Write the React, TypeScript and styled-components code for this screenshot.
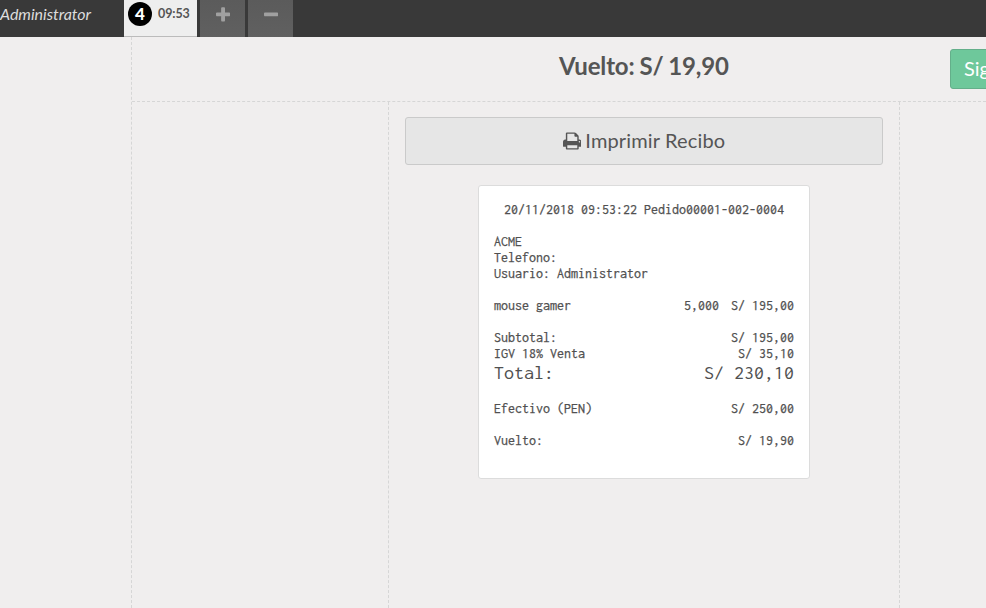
import React from "react";
import styled, { createGlobalStyle } from "styled-components";

const Global = createGlobalStyle`
  * { box-sizing: border-box; }
  html, body { margin: 0; padding: 0; overflow: hidden; background: #f0eeee; }
  body { font-family: Lato, "Open Sans", sans-serif; color: #555; }
`;

const Screen = styled.div`
  display: flex;
  flex-direction: column;
  width: 986px;
  height: 608px;
  overflow: hidden;
  background: #f0eeee;
`;

const TopBar = styled.header`
  display: flex;
  flex: none;
  height: 37px;
  background: #393939;
`;

const UserName = styled.span`
  width: 124px;
  color: #ddd;
  font-size: 16px;
  font-style: italic;
  line-height: 28px;
  letter-spacing: -0.03px;
  white-space: nowrap;
`;

const OrderTab = styled.div`
  display: flex;
  align-items: flex-start;
  width: 73px;
  padding: 2px 0 0 4px;
  margin-right: 3px;
  background: #eee;
  border-bottom: 1px solid #bbb;
`;

const OrderNumber = styled.span`
  width: 24px;
  height: 24px;
  border-radius: 50%;
  background: #000;
  color: #fff;
  font-size: 17px;
  font-weight: 900;
  line-height: 24px;
  text-align: center;
`;

const OrderTime = styled.span`
  margin-left: 6px;
  font-size: 12.5px;
  font-weight: 700;
  line-height: 23px;
  letter-spacing: -0.1px;
`;

const TabButton = styled.button`
  display: flex;
  justify-content: center;
  width: 45px;
  height: 37px;
  margin: 0 3px 0 0;
  padding: 6px 0 0 1px;
  border: 0;
  background: linear-gradient(#5b5b5b, #606060);
  color: #a0a0a0;
`;

const Icon = styled.svg<{ $size: number }>`
  display: block;
  height: ${(p) => p.$size}px;
  fill: currentColor;
`;

const Payment = styled.main`
  display: flex;
  flex: 1;
  flex-direction: column;
  margin-left: 131px;
  border-left: 1px dashed #d6d6d6;
`;

const Heading = styled.div`
  display: flex;
  flex: none;
  height: 65px;
  border-bottom: 1px dashed #d6d6d6;
`;

const Change = styled.h1`
  flex: none;
  width: 818px;
  margin: 0;
  padding-left: 427px;
  font-size: 24px;
  font-weight: 700;
  line-height: 58px;
  letter-spacing: -0.15px;
  word-spacing: -0.8px;
  white-space: nowrap;
`;

const NextButton = styled.button`
  flex: none;
  width: 120px;
  height: 40px;
  margin-top: 12px;
  padding: 0 0 2px 13px;
  border: 1px solid #64af8a;
  border-radius: 3px;
  background: #6ec89b;
  color: #fff;
  font: 20px/36px Lato, sans-serif;
  text-align: left;
`;

const ReceiptArea = styled.section`
  display: flex;
  flex: 1;
  flex-direction: column;
  align-items: center;
  width: 512px;
  margin-left: 256px;
  padding-top: 15px;
  border: 1px dashed #d6d6d6;
  border-width: 0 1px;
`;

const PrintButton = styled.button`
  display: flex;
  flex: none;
  align-items: center;
  justify-content: center;
  gap: 4px;
  width: 478px;
  height: 48px;
  padding: 0;
  border: 1px solid #cacaca;
  border-radius: 3px;
  background: #e6e6e6;
  color: #555;
  font: 20px/44px Lato, sans-serif;
  letter-spacing: 0.15px;
`;

const PrintLabel = styled.span`
  padding-bottom: 2px;
`;

const Ticket = styled.article`
  flex: none;
  width: 332px;
  height: 294px;
  margin-top: 20px;
  padding: 16px 15px;
  border: 1px solid #dcdcdc;
  border-radius: 3px;
  background: #fff;
  color: #505050;
  font: 14px/16px Inconsolata, "DejaVu Sans Mono", monospace;
  font-size-adjust: ch-width 0.5;
  -webkit-text-stroke: 0.25px #505050;
  white-space: pre;
`;

const TicketTitle = styled.div`
  text-align: center;
`;

const TicketBlock = styled.div`
  margin-top: 16px;
`;

const Row = styled.div`
  display: flex;
  justify-content: space-between;
`;

const TotalRow = styled(Row)`
  height: 23px;
  font-size: 20px;
  line-height: 21px;
  -webkit-text-stroke-width: 0;
`;

const Amounts = styled.span`
  display: flex;
  gap: 12px;
`;

const PLUS =
  "M1408 736v192q0 40-28 68t-68 28h-416v416q0 40-28 68t-68 28h-192q-40 0-68-28t-28-68v-416h-416q-40 0-68-28t-28-68v-192q0-40 28-68t68-28h416v-416q0-40 28-68t68-28h192q40 0 68 28t28 68v416h416q40 0 68 28t28 68z";
const MINUS =
  "M1408 736v192q0 40-28 68t-68 28h-1216q-40 0-68-28t-28-68v-192q0-40 28-68t68-28h1216q40 0 68 28t28 68z";
const PRINT =
  "M384 1536h896v-256h-896v256zM384 896h896v-384h-160q-40 0-68-28t-28-68v-160h-640v640zM1536 960q0-26-19-45t-45-19-45 19-19 45 19 45 45 19 45-19 19-45zM1664 960v416q0 13-9.5 22.5t-22.5 9.5h-224v160q0 40-28 68t-68 28h-960q-40 0-68-28t-28-68v-160h-224q-13 0-22.5-9.5t-9.5-22.5v-416q0-79 56.5-135.5t135.5-56.5h64v-544q0-40 28-68t68-28h672q40 0 88 20t76 48l152 152q28 28 48 76t20 88v256h64q79 0 135.5 56.5t56.5 135.5z";

export default function App() {
  return (
    <>
      <Global />
      <Screen>
        <TopBar>
          <UserName>Administrator</UserName>
          <OrderTab>
            <OrderNumber>4</OrderNumber>
            <OrderTime>09:53</OrderTime>
          </OrderTab>
          <TabButton aria-label="+">
            <Icon $size={18} viewBox="0 0 1408 1792"><path d={PLUS} /></Icon>
          </TabButton>
          <TabButton aria-label="-">
            <Icon $size={18} viewBox="0 0 1408 1792"><path d={MINUS} /></Icon>
          </TabButton>
        </TopBar>
        <Payment>
          <Heading>
            <Change>Vuelto: S/ 19,90</Change>
            <NextButton>Siguiente</NextButton>
          </Heading>
          <ReceiptArea>
            <PrintButton>
              <Icon $size={20} viewBox="0 0 1664 1792"><path d={PRINT} /></Icon>
              <PrintLabel>Imprimir Recibo</PrintLabel>
            </PrintButton>
            <Ticket>
              <TicketTitle>20/11/2018 09:53:22 Pedido00001-002-0004</TicketTitle>
              <TicketBlock>
                <div>ACME</div>
                <div>Telefono:</div>
                <div>Usuario: Administrator</div>
              </TicketBlock>
              <TicketBlock>
                <Row>
                  <span>mouse gamer</span>
                  <Amounts><span>5,000</span><span>S/ 195,00</span></Amounts>
                </Row>
              </TicketBlock>
              <TicketBlock>
                <Row><span>Subtotal:</span><span>S/ 195,00</span></Row>
                <Row><span>IGV 18% Venta</span><span>S/ 35,10</span></Row>
                <TotalRow><span>Total:</span><span>S/ 230,10</span></TotalRow>
              </TicketBlock>
              <TicketBlock>
                <Row><span>Efectivo (PEN)</span><span>S/ 250,00</span></Row>
              </TicketBlock>
              <TicketBlock>
                <Row><span>Vuelto:</span><span>S/ 19,90</span></Row>
              </TicketBlock>
            </Ticket>
          </ReceiptArea>
        </Payment>
      </Screen>
    </>
  );
}
